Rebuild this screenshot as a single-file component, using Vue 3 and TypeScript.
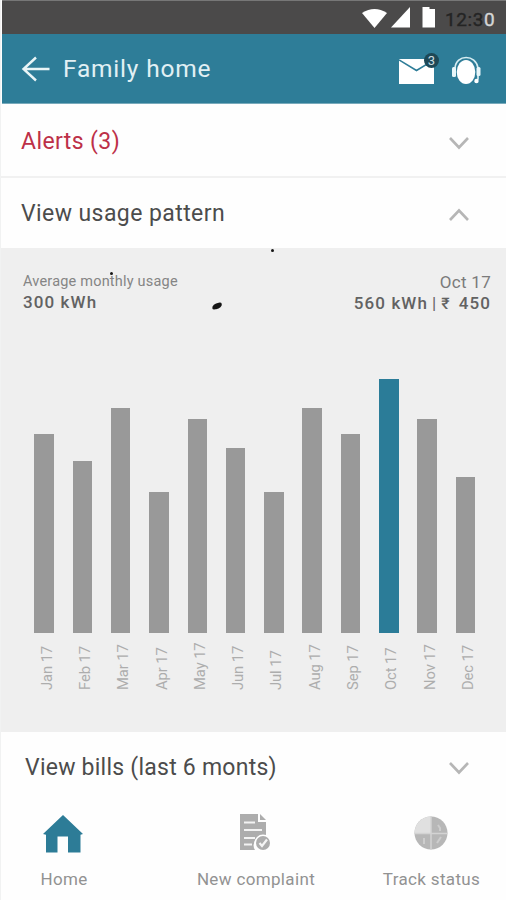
<script setup lang="ts">
interface Usage {
  month: string
  height: number
  active?: boolean
}

const usage: Usage[] = [
  { month: 'Jan 17', height: 199 },
  { month: 'Feb 17', height: 172 },
  { month: 'Mar 17', height: 225 },
  { month: 'Apr 17', height: 141 },
  { month: 'May 17', height: 214 },
  { month: 'Jun 17', height: 185 },
  { month: 'Jul 17', height: 141 },
  { month: 'Aug 17', height: 225 },
  { month: 'Sep 17', height: 199 },
  { month: 'Oct 17', height: 254, active: true },
  { month: 'Nov 17', height: 214 },
  { month: 'Dec 17', height: 156 },
]
</script>

<template>
  <main class="screen">
    <div class="status">
      <svg class="signals" width="74" height="24" viewBox="0 0 74 24">
        <path d="M0 6Q12.500 -2 25 6L12.500 21Z" />
        <path d="M29 20.500L48 0V20.500Z" />
        <path d="M60.500 2V0H67.500V2H73V20.500H60.500Z" />
      </svg>
      <span class="time">12:3<span class="last">0</span></span>
    </div>

    <header class="topbar">
      <svg class="back" width="30" height="26" viewBox="0 0 30 26">
        <path d="M15 1.500L2.500 13L15 24.500M2.500 13H28.500" />
      </svg>
      <h1 class="title">Family home</h1>
      <div class="mail">
        <svg width="36" height="25" viewBox="0 0 36 25">
          <rect width="35" height="25" fill="#fff" />
          <path d="M0 .8L17.500 11.500L35 .8" fill="none" stroke="#2e7d98" stroke-width="1.500" />
        </svg>
        <span class="badge">3</span>
      </div>
      <svg class="support" width="29" height="30" viewBox="0 0 29 30">
        <ellipse cx="14" cy="16" rx="9.300" ry="12" fill="#fff" />
        <path d="M3 15V12C4-2 24-2 26 12V23L23 26" fill="none" stroke="#d6edf2" stroke-width="1.700" />
        <rect x="0" y="11" width="4" height="10" rx="1.500" fill="#e8f6f9" />
        <rect x="24.500" y="11" width="4" height="9" rx="1.500" fill="#e8f6f9" />
        <circle cx="24.500" cy="25" r="2.200" fill="#fff" />
      </svg>
    </header>

    <section class="row alerts">
      <span class="alerts-text">Alerts (3)</span>
      <svg class="chevron" width="22" height="14" viewBox="0 0 22 14"><path d="M2 2L11 11.500L20 2" /></svg>
    </section>
    <section class="row pattern">
      <span class="pattern-text">View usage pattern</span>
      <svg class="chevron" width="22" height="14" viewBox="0 0 22 14"><path d="M2 12L11 2.500L20 12" /></svg>
    </section>

    <section class="panel">
      <i class="speck top"></i>
      <i class="speck middle"></i>
      <i class="speck smudge"></i>
      <div class="summary">
        <div>
          <div class="caption">Average monthly usage</div>
          <div class="value average">300 kWh</div>
        </div>
        <div class="right">
          <div class="period">Oct 17</div>
          <div class="value current">560 kWh<span class="divider">|</span><span class="rupee">₹</span>450</div>
        </div>
      </div>
      <div class="chart">
        <div v-for="item in usage" :key="item.month" class="column">
          <div class="bar" :class="{ active: item.active }" :style="{ height: item.height + 'px' }"></div>
          <span class="month">{{ item.month }}</span>
        </div>
      </div>
    </section>

    <section class="row bills">
      <span class="bills-text">View bills (last 6 monts)</span>
      <svg class="chevron" width="22" height="14" viewBox="0 0 22 14"><path d="M2 2L11 11.500L20 2" /></svg>
    </section>

    <nav class="nav">
      <div class="tab home">
        <svg width="40" height="40" viewBox="0 0 40 40">
          <path d="M20 2L0 21L3 21.800V39.500H14.500V23.500H25V39.500H37.500V21.800L40 21Z" fill="#2d7c97" />
        </svg>
        <span>Home</span>
      </div>
      <div class="tab complaint">
        <svg width="30" height="40" viewBox="0 0 30 40">
          <path d="M0 1H18V9H26V24A9 9 0 0 0 15 37H0Z" fill="#adadad" />
          <path d="M20 1L26 7H20Z" fill="#adadad" />
          <path d="M4 9.500H15M4 17H22M4 25H15M4 31.500H12" stroke="#f3f3f3" stroke-width="2.200" />
          <circle cx="23" cy="30" r="8.500" fill="#fff" />
          <circle cx="23" cy="30" r="7" fill="#adadad" />
          <path d="M19.500 30L22 33L27 26.500" fill="none" stroke="#f5f5f5" stroke-width="2.200" />
        </svg>
        <span>New complaint</span>
      </div>
      <div class="tab track">
        <svg width="34" height="40" viewBox="0 0 34 40">
          <circle cx="17" cy="20" r="16.500" fill="#b7b7b7" />
          <path d="M17 20V3.500A16.500 16.500 0 0 0 .5 20Z" fill="#e0e0e0" />
          <path d="M17 3.500V36.500M.5 20.500H33.500" stroke="#d3d3d3" stroke-width="1.500" />
          <path d="M24 12L26 15V18M10 25V31M27 24L23 30" fill="none" stroke="#cdcdcd" stroke-width="2" />
        </svg>
        <span>Track status</span>
      </div>
    </nav>
  </main>
</template>

<style>
body { margin: 0; background: #fefefe; }
</style>

<style scoped>
.screen { width: 506px; height: 900px; overflow: hidden; display: flex; flex-direction: column; box-sizing: border-box; border-left: 1px solid #f1f2f2; background: #fefefe; font-family: Roboto, sans-serif; color: #4c4c4c; white-space: nowrap; }
.status { height: 34px; flex: none; box-sizing: border-box; display: flex; align-items: center; justify-content: flex-end; padding: 3px 11px 0 0; background: #4b4a4a; border-top: 1px solid #777; margin-left: 1px; }
.signals { fill: #fff; margin: 0 9px 0 0; }
.time { width: 50px; font-size: 19px; color: #242424; letter-spacing: .6px; -webkit-text-stroke: .4px #242424; }
.last { color: #d6d6d6; -webkit-text-stroke-color: #d6d6d6; }
.topbar { height: 70px; flex: none; box-sizing: border-box; border-bottom: 1px solid #78aabb; display: flex; align-items: center; background: #2e7d98; margin-left: 1px; padding-left: 19px; }
.back { fill: none; stroke: #e9f5f7; stroke-width: 2.4; }
.title { margin: 0 0 0 12px; width: 323px; font-size: 24.5px; font-weight: 400; line-height: 30px; letter-spacing: .8px; color: #e1f0f4; }
.mail { position: relative; margin: 5px 0 0 13px; height: 25px; width: 36px; }
.badge { position: absolute; left: 25px; top: -6px; width: 15px; height: 15px; border-radius: 50%; background: #1d4856; color: #cbdde1; font-size: 13px; line-height: 15px; text-align: center; }
.support { margin: 4px 0 0 17px; }
.row { flex: none; display: flex; justify-content: space-between; align-items: center; padding: 0 36px 0 20px; box-sizing: border-box; font-size: 23px; line-height: 28px; }
.alerts { height: 74px; border-bottom: 2px solid #f1f1f1; color: #bd3048; }
.pattern { height: 70px; }
.alerts-text { letter-spacing: .4px; margin-top: 3px; }
.pattern-text { letter-spacing: .42px; margin-top: 2px; }
.bills-text { letter-spacing: .24px; margin: 2px 0 0 4px; }
.chevron { fill: none; stroke: #b6b6b6; stroke-width: 2.6; margin-top: 4px; }
.alerts .chevron { margin-top: 6px; }
.bills .chevron { margin-top: 2px; }
.panel { position: relative; flex: none; height: 484px; background: #efefef; }
.summary { height: 101px; box-sizing: border-box; padding: 24px 16px 0 22px; display: flex; justify-content: space-between; }
.caption { font-size: 14.5px; line-height: 20px; color: #858585; letter-spacing: .2px; }
.period { font-size: 17px; line-height: 20px; color: #7b7b7b; letter-spacing: .3px; }
.value { font-size: 17px; line-height: 22px; font-weight: 500; color: #626262; letter-spacing: 1.1px; }
.value.average { margin-top: -1px; }
.right { text-align: right; margin-right: -1px; }
.divider { margin: 0 4px; font-weight: 400; }
.rupee { margin-right: 8px; font-family: Roboto, "DejaVu Sans", sans-serif; font-size: 16px; }
.chart { height: 383px; box-sizing: border-box; padding: 0 21.5px 0 24px; display: grid; grid-template-columns: repeat(12, 1fr); }
.column { display: flex; flex-direction: column; align-items: center; justify-content: flex-end; }
.bar { width: 19.5px; flex: none; background: #999; }
.bar.active { background: #2b7c98; }
.month { height: 57px; margin: 0 0 42px 5px; writing-mode: vertical-rl; transform: rotate(180deg); font-size: 14.8px; line-height: 18px; letter-spacing: -.1px; color: #adadad; }
.speck { position: absolute; background: #151515; border-radius: 50%; }
.speck.top { left: 270px; top: 1px; width: 3px; height: 3px; }
.speck.middle { left: 109px; top: 24px; width: 3px; height: 3px; }
.speck.smudge { left: 211px; top: 55px; width: 10px; height: 6px; border-radius: 80% 30% 70% 30%; transform: rotate(-10deg); }
.bills { height: 70px; }
.nav { flex: none; height: 98px; padding-top: 11px; box-sizing: border-box; display: grid; grid-template-columns: 124px 260px 91px; justify-content: start; }
.tab { display: flex; flex-direction: column; align-items: center; gap: 15px; font-size: 17px; line-height: 22px; color: #929292; }
.tab span { letter-spacing: .35px; margin-left: 2px; }
</style>
